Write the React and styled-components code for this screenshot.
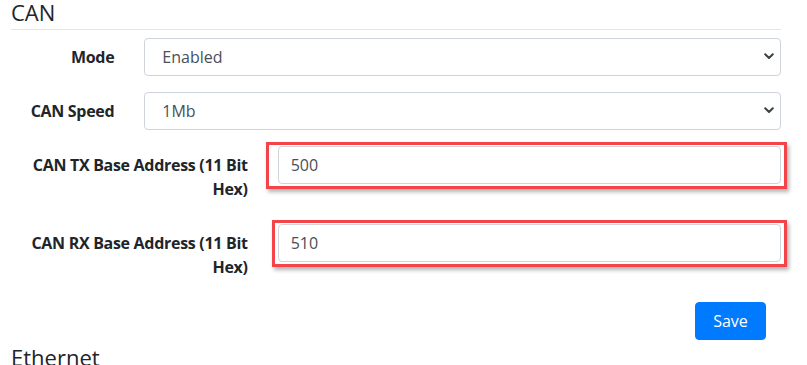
import React from "react";
import styled, { createGlobalStyle } from "styled-components";

const FONT = `"Open Sans", "Noto Sans", "Liberation Sans", sans-serif`;

const GlobalStyle = createGlobalStyle`
  html, body { margin: 0; padding: 0; background: #fff; }
  body {
    font-family: ${FONT};
    font-size: 16px;
    line-height: 1.5;
    color: #212529;
    overflow: hidden;
  }
  *, *::before, *::after { box-sizing: border-box; }
`;

const Page = styled.div`
  width: 807px;
  height: 365px;
  overflow: hidden;
  padding-left: 11px;
`;

const Container = styled.div`
  width: 770px;
`;

const SectionTitle = styled.h4`
  margin: ${(p) => (p.$spaced ? "5px" : "0")} 0 8px;
  padding-bottom: 5px;
  font-size: 22px;
  font-weight: 400;
  line-height: 24px;
  color: #212529;
  border-bottom: 1px solid #e3e6e9;
`;

const FormGroup = styled.div`
  display: flex;
  margin: 0 -15px 16px;
`;

const Label = styled.label`
  flex: 0 0 ${(p) => (p.$span / 12) * 100}%;
  max-width: ${(p) => (p.$span / 12) * 100}%;
  padding: 7px 15px;
  text-align: right;
  font-weight: 700;
  font-size: 16px;
  line-height: 24px;
  letter-spacing: -0.3px;
  color: #212529;
`;

const Field = styled.div`
  flex: 1 1 0;
  min-width: 0;
  padding: 0 15px;
`;

const InputWrap = styled.div`
  position: relative;
`;

const Select = styled.select`
  appearance: none;
  -webkit-appearance: none;
  display: block;
  width: 100%;
  height: 38px;
  padding: 0 30px 0 17px;
  font-family: ${FONT};
  font-size: 16px;
  line-height: 24px;
  color: #495057;
  background: #fff;
  border: 1px solid #ced4da;
  border-radius: 4px;
  outline: none;
`;

const Chevron = styled.svg`
  position: absolute;
  right: 7px;
  top: 15px;
  width: 10px;
  height: 7px;
  pointer-events: none;
`;

const TextInput = styled.input`
  display: block;
  width: 100%;
  height: 38px;
  padding: 6px 12px;
  font-family: ${FONT};
  font-size: 16px;
  line-height: 24px;
  color: #495057;
  background: #fff;
  border: 1px solid #ced4da;
  border-radius: 4px;
  outline: none;
`;

const Highlight = styled.div`
  position: absolute;
  top: ${(p) => p.$t}px;
  bottom: ${(p) => p.$b}px;
  left: ${(p) => p.$l}px;
  right: ${(p) => p.$r}px;
  border: 3px solid #f4444a;
  box-shadow: 2px 3px 4px rgba(0, 0, 0, 0.3);
  pointer-events: none;
`;

const Actions = styled.div`
  display: flex;
  justify-content: flex-end;
  padding-right: 15px;
`;

const Button = styled.button`
  width: 71px;
  height: 38px;
  padding: 0;
  font-family: ${FONT};
  font-size: 16px;
  line-height: 24px;
  color: #fff;
  background: #007bff;
  border: 1px solid #007bff;
  border-radius: 4px;
  cursor: pointer;
`;

function SelectField({ value, options }) {
  return (
    <InputWrap>
      <Select defaultValue={value}>
        {options.map((o) => (
          <option key={o}>{o}</option>
        ))}
      </Select>
      <Chevron viewBox="0 0 10 7">
        <polyline
          points="1.2,1.2 5,5 8.8,1.2"
          fill="none"
          stroke="#3c4043"
          strokeWidth="2"
          strokeLinecap="round"
          strokeLinejoin="round"
        />
      </Chevron>
    </InputWrap>
  );
}

export default function App() {
  return (
    <>
      <GlobalStyle />
      <Page>
        <Container>
          <SectionTitle>CAN</SectionTitle>
          <FormGroup>
            <Label $span={2}>Mode</Label>
            <Field>
              <SelectField value="Enabled" options={["Enabled", "Disabled"]} />
            </Field>
          </FormGroup>
          <FormGroup>
            <Label $span={2}>CAN Speed</Label>
            <Field>
              <SelectField
                value="1Mb"
                options={["125Kb", "250Kb", "500Kb", "1Mb"]}
              />
            </Field>
          </FormGroup>
          <FormGroup>
            <Label $span={4}>CAN TX Base Address (11 Bit Hex)</Label>
            <Field>
              <InputWrap>
                <TextInput defaultValue="500" />
                <Highlight $t={-4} $b={-5} $l={-12} $r={-6} />
              </InputWrap>
            </Field>
          </FormGroup>
          <FormGroup>
            <Label $span={4}>CAN RX Base Address (11 Bit Hex)</Label>
            <Field>
              <InputWrap>
                <TextInput defaultValue="510" />
                <Highlight $t={-4} $b={-5} $l={-6} $r={-6} />
              </InputWrap>
            </Field>
          </FormGroup>
          <Actions>
            <Button type="button">Save</Button>
          </Actions>
          <SectionTitle $spaced>Ethernet</SectionTitle>
        </Container>
      </Page>
    </>
  );
}
